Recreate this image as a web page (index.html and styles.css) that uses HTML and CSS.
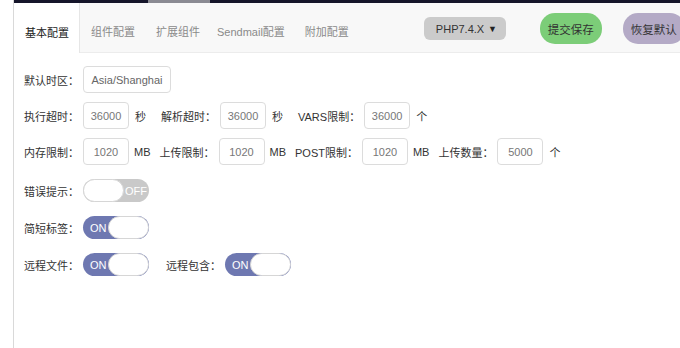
FILE: index.html
```html
<!DOCTYPE html>
<html lang="zh-CN">
<head>
<meta charset="utf-8">
<title>PHP 配置</title>
<link rel="stylesheet" href="styles.css">
</head>
<body>
<div class="frame">
  <div class="topbar"><span class="topbar-active"></span></div>
  <div class="tabs">
    <div class="tab active">基本配置</div>
    <div class="tab">组件配置</div>
    <div class="tab">扩展组件</div>
    <div class="tab tab-narrow">Sendmail配置</div>
    <div class="tab">附加配置</div>
    <div class="tools">
      <div class="select"><span>PHP7.4.X</span><span class="caret">▼</span></div>
      <button class="btn btn-save">提交保存</button>
      <button class="btn btn-reset">恢复默认</button>
    </div>
  </div>
  <div class="form">
    <div class="row">
      <div class="field">
        <span class="label">默认时区：</span><input class="inp inp-text" value="Asia/Shanghai">
      </div>
    </div>
    <div class="row">
      <div class="field">
        <span class="label">执行超时：</span><input class="inp" value="36000"><span class="unit unit-cn">秒</span>
      </div>
      <div class="field">
        <span class="label">解析超时：</span><input class="inp" value="36000"><span class="unit unit-cn">秒</span>
      </div>
      <div class="field">
        <span class="label">VARS限制：</span><input class="inp" value="36000"><span class="unit unit-cn">个</span>
      </div>
    </div>
    <div class="row">
      <div class="field">
        <span class="label">内存限制：</span><input class="inp" value="1020"><span class="unit">MB</span>
      </div>
      <div class="field">
        <span class="label">上传限制：</span><input class="inp" value="1020"><span class="unit">MB</span>
      </div>
      <div class="field">
        <span class="label">POST限制：</span><input class="inp" value="1020"><span class="unit">MB</span>
      </div>
      <div class="field">
        <span class="label">上传数量：</span><input class="inp" value="5000"><span class="unit unit-cn">个</span>
      </div>
    </div>
    <div class="row row-switch">
      <div class="field field-switch">
        <span class="label">错误提示：</span>
        <div class="switch off"><span class="knob"></span><span class="switch-text">OFF</span></div>
      </div>
    </div>
    <div class="row row-switch">
      <div class="field field-switch">
        <span class="label">简短标签：</span>
        <div class="switch on"><span class="switch-text">ON</span><span class="knob"></span></div>
      </div>
    </div>
    <div class="row row-switch">
      <div class="field field-switch">
        <span class="label">远程文件：</span>
        <div class="switch on"><span class="switch-text">ON</span><span class="knob"></span></div>
      </div>
      <div class="field field-switch">
        <span class="label">远程包含：</span>
        <div class="switch on"><span class="switch-text">ON</span><span class="knob"></span></div>
      </div>
    </div>
  </div>
</div>
</body>
</html>
```

FILE: styles.css
```css
* { box-sizing: border-box; }
html, body {
  margin: 0;
  padding: 0;
  background: #ffffff;
  overflow: hidden;
}
body {
  font-family: "Liberation Sans", "Noto Sans CJK SC", sans-serif;
  font-size: 11px;
  color: #333;
}
.frame {
  margin-left: 13px;
  border-left: 1px solid #d9d9d9;
  height: 348px;
}
.topbar {
  height: 3px;
  background: #15152a;
  display: flex;
}
.topbar-active {
  margin-left: 134px;
  width: 62px;
  background: #8a8a92;
}
.tabs {
  height: 50px;
  display: flex;
  align-items: stretch;
  background: #f8f8f8;
  border-bottom: 1px solid #ececec;
  white-space: nowrap;
}
.tab {
  flex: none;
  display: flex;
  align-items: center;
  padding: 7px 10px 0 11px;
  color: #8a8a8a;
}
.tab-narrow {
  padding-left: 7px;
  padding-right: 9px;
}
.tab.active {
  background: #fff;
  color: #222;
  border-right: 1px solid #e6e6e6;
  margin-bottom: -1px;
}
.tools {
  flex: none;
  display: flex;
  align-items: center;
  padding-top: 2px;
  margin-left: 65px;
}
.select {
  flex: none;
  width: 82px;
  height: 23px;
  border-radius: 6px;
  background: #cbcbcb;
  display: flex;
  align-items: center;
  justify-content: space-between;
  padding: 0 9px 0 12px;
  color: #333;
  font-size: 11px;
}
.caret {
  font-size: 9px;
  color: #222;
}
.btn {
  flex: none;
  font: inherit;
  font-size: 11.5px;
  color: #333;
  border: none;
  height: 31px;
  width: 62px;
  border-radius: 15px;
  padding: 0;
}
.btn-save {
  margin-left: 34px;
  background: #7ccd78;
}
.btn-reset {
  margin-left: 21px;
  background: #b4aac6;
}
.form {
  padding: 13px 0 0 10px;
  display: flex;
  flex-direction: column;
  gap: 9px;
}
.row {
  display: flex;
  align-items: center;
  height: 27px;
}
.row-switch {
  height: 23px;
  margin-top: 5px;
}
.field {
  flex: none;
  display: flex;
  align-items: center;
  margin-right: 9px;
}
.field-switch {
  margin-right: 17px;
}
.label {
  margin-right: 4px;
  color: #333;
}
.inp {
  width: 46px;
  height: 27px;
  border: 1px solid #dcdcdc;
  border-radius: 4px;
  background: #fff;
  color: #777;
  font: inherit;
  text-align: center;
  padding: 0;
  outline: none;
}
.inp-text {
  width: 88px;
  color: #666;
}
.unit {
  margin-left: 5px;
  color: #333;
}
.unit-cn {
  margin-left: 6px;
  margin-right: 6px;
}
.switch {
  width: 66px;
  height: 23px;
  border-radius: 12px;
  display: flex;
  align-items: center;
  overflow: hidden;
}
.switch.on { background: #6e78b1; }
.switch.off { background: #c9c9c9; }
.knob {
  width: 41px;
  height: 23px;
  border-radius: 12px;
  background: #fff;
  border: 1px solid #d6d6d6;
  flex: none;
}
.switch-text {
  flex: 1;
  color: #fff;
  font-size: 11px;
}
.switch.on .switch-text { padding-left: 7px; }
.switch.off .switch-text { padding-left: 1px; }
```
